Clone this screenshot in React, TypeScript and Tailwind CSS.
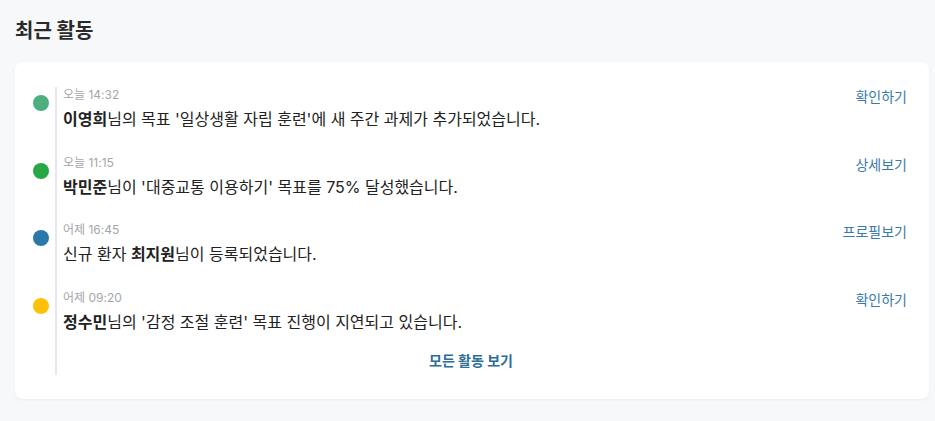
import React from "react";

type Activity = {
  time: string;
  color: string;
  action: string;
  body: React.ReactNode;
};

const activities: Activity[] = [
  {
    time: "오늘 14:32",
    color: "bg-[#4caf7d]",
    action: "확인하기",
    body: (
      <>
        <b className="font-bold">이영희</b>님의 목표 '일상생활 자립 훈련'에 새 주간 과제가 추가되었습니다.
      </>
    ),
  },
  {
    time: "오늘 11:15",
    color: "bg-[#28a745]",
    action: "상세보기",
    body: (
      <>
        <b className="font-bold">박민준</b>님이 '대중교통 이용하기' 목표를 75% 달성했습니다.
      </>
    ),
  },
  {
    time: "어제 16:45",
    color: "bg-[#2a78aa]",
    action: "프로필보기",
    body: (
      <>
        신규 환자 <b className="font-bold">최지원</b>님이 등록되었습니다.
      </>
    ),
  },
  {
    time: "어제 09:20",
    color: "bg-[#ffc107]",
    action: "확인하기",
    body: (
      <>
        <b className="font-bold">정수민</b>님의 '감정 조절 훈련' 목표 진행이 지연되고 있습니다.
      </>
    ),
  },
];

export default function App() {
  return (
    <div
      className="min-h-[421px] bg-[#f7f8fa] pl-[15px] pr-[6px] pt-[16px] text-[#222]"
      style={{ fontFamily: '"Inter", "Noto Sans CJK KR", "Noto Sans", sans-serif' }}
    >
      <h2 className="mb-[16px] text-[20px] font-bold leading-[30px] text-[#2a2a2a]">최근 활동</h2>

      <div className="rounded-lg bg-white pb-[24px] pl-5 pr-[22px] pt-[25px] shadow-[0_1px_3px_rgba(0,0,0,0.05)]">
        <div className="relative">
          {/* timeline line */}
          <div className="absolute bottom-0 left-[20px] top-0 w-[2px] bg-[#e6e8eb]" />

          {activities.map((a, i) => (
            <div
              key={i}
              className={`relative flex items-start justify-between pl-[28px] ${
                i < activities.length - 1 ? "mb-[23.5px]" : ""
              }`}
            >
              <span className={`absolute left-[-2px] top-[8px] h-4 w-4 rounded-full ${a.color}`} />
              <div>
                <div className="mb-1 text-[12px] leading-4 text-[#a3a6aa]">{a.time}</div>
                <div className="text-[16px] leading-6 text-[#222]">{a.body}</div>
              </div>
              <a className="mt-[2px] cursor-pointer text-[14px] leading-4 text-[#3a7aa8]">{a.action}</a>
            </div>
          ))}

          <div className="mt-[14px] pb-[3px] text-center">
            <a className="cursor-pointer text-[14px] font-bold leading-5 text-[#2c6d98]">모든 활동 보기</a>
          </div>
        </div>
      </div>
    </div>
  );
}
